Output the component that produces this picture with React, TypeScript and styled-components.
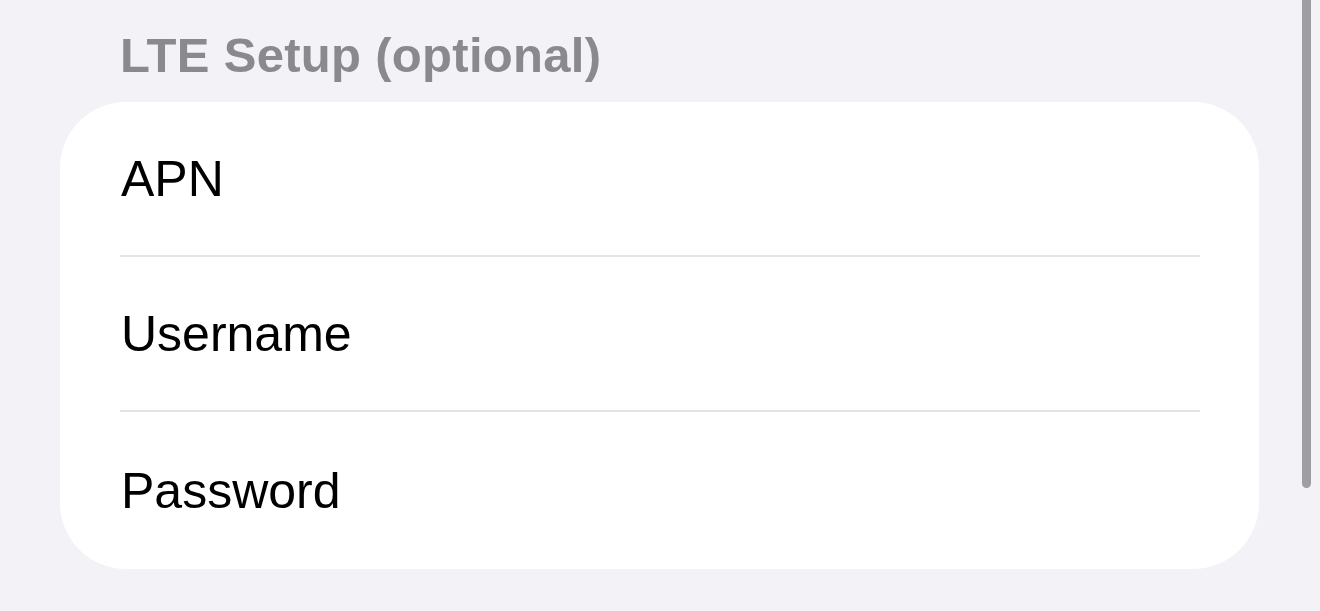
import React from "react";
import styled, { createGlobalStyle } from "styled-components";

const GlobalStyle = createGlobalStyle`
  html, body {
    margin: 0;
    padding: 0;
    background: #f2f2f7;
    font-family: "Liberation Sans", Arial, sans-serif;
  }
`;

const Page = styled.div`
  position: relative;
  width: 1320px;
  height: 611px;
  overflow: hidden;
  background: #f2f2f7;
  box-sizing: border-box;
  padding: 27px 61px 0 60px;
`;

const SectionHeader = styled.h2`
  margin: 0 0 19px 0;
  padding-left: 60px;
  font-size: 49px;
  line-height: 56px;
  font-weight: 700;
  color: #8a8a8e;
  letter-spacing: 0.3px;
`;

const Card = styled.div`
  background: #ffffff;
  border-radius: 66px;
  padding: 0 59px 0 60px;
  display: flex;
  flex-direction: column;
`;

const Row = styled.div<{ $last?: boolean }>`
  height: ${(p) => (p.$last ? "157px" : "153px")};
  display: flex;
  align-items: center;
  border-bottom: ${(p) => (p.$last ? "none" : "2px solid #e4e4e8")};
`;

const Label = styled.span`
  font-size: 50px;
  line-height: 50px;
  color: #000000;
  padding-left: 1px;
`;

const ScrollThumb = styled.div`
  position: absolute;
  top: -10px;
  right: 9px;
  width: 9px;
  height: 498px;
  border-radius: 5px;
  background: #9e9ea3;
`;

const rows = ["APN", "Username", "Password"];

export default function App() {
  return (
    <>
      <GlobalStyle />
      <Page>
        <SectionHeader>LTE Setup (optional)</SectionHeader>
        <Card>
          {rows.map((r, i) => (
            <Row key={r} $last={i === rows.length - 1}>
              <Label>{r}</Label>
            </Row>
          ))}
        </Card>
        <ScrollThumb />
      </Page>
    </>
  );
}
